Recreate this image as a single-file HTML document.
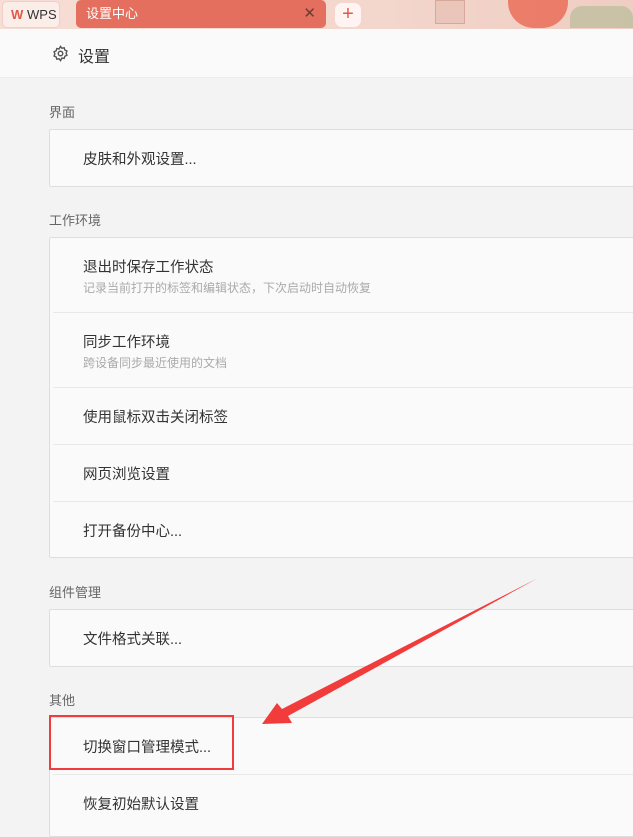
<!DOCTYPE html>
<html><head><meta charset="utf-8"><style>
*{margin:0;padding:0;box-sizing:border-box}
body{width:633px;height:824px;overflow:hidden;background:#f3f3f3;font-family:"Liberation Sans","Noto Sans CJK SC",sans-serif;position:relative}
.tabbar{position:absolute;left:0;top:0;width:633px;height:29px;background:linear-gradient(90deg,#f6ddd5,#f3d6cc 60%,#efcdc2)}
.wps{position:absolute;left:2px;top:1px;width:58px;height:27px;background:#fbeee9;border-radius:5px;border:1px solid #f0cfc5;font-size:13px;color:#333;line-height:26px;padding-left:24px}
.wps b{position:absolute;left:8px;top:0;color:#e0584a;font-size:13px}
.tab{position:absolute;left:76px;top:0;width:250px;height:28px;background:#e56f5f;border-radius:5px;color:#fff;font-size:13px;line-height:28px;padding-left:10px}
.tab i{position:absolute;right:10px;top:0;font-style:normal;color:#6b3b35;font-size:15px}
.plus{position:absolute;left:335px;top:3px;width:26px;height:24px;background:#fff4f1;border-radius:7px;color:#e0584a;text-align:center;line-height:23px;font-size:20px}
.head{position:absolute;left:0;top:29px;width:633px;height:49px;background:#fafafa;border-bottom:1px solid #ececec}
.head span{position:absolute;left:78px;top:14px;font-size:16px;color:#333}
.lbl{position:absolute;left:49px;font-size:13px;color:#666}
.card{position:absolute;left:49px;width:600px;background:#fafafa;border:1px solid #dedede;border-radius:2px}
.row{position:relative;border-bottom:1px solid #e8e8e8;margin-left:3px}
.row:last-child{border-bottom:none}
.t{position:absolute;left:30px;font-size:14.5px;color:#333;white-space:nowrap}
.s{position:absolute;left:30px;font-size:12px;color:#aaa;white-space:nowrap}
</style></head><body>
<div class="tabbar">
<div class="wps"><b>W</b>WPS</div>
<div class="tab">设置中心<i>✕</i></div>
<div class="plus">+</div>
<div style="position:absolute;left:435px;top:0;width:30px;height:24px;background:#eac6ba;border:1px solid #d8a89a"></div>
<div style="position:absolute;left:508px;top:0;width:60px;height:28px;border-radius:0 0 26px 26px;background:#e8604a;opacity:.75"></div>
<div style="position:absolute;left:570px;top:6px;width:63px;height:22px;background:#a9b890;border-radius:12px 12px 0 0;opacity:.55"></div>
</div>
<div class="head">
<svg style="position:absolute;left:52px;top:16px" width="17" height="17" viewBox="0 0 24 24" fill="none" stroke="#555" stroke-width="2"><circle cx="12" cy="12" r="3.2"/><path d="M12 2l2 2.6 3.2-.6.9 3.1 3 1.4-1.2 3 1.2 3-3 1.4-.9 3.1-3.2-.6L12 22l-2-2.6-3.2.6-.9-3.1-3-1.4 1.2-3-1.2-3 3-1.4.9-3.1 3.2.6z"/></svg>
<span>设置</span></div>

<div class="lbl" style="top:102px">界面</div>
<div class="card" style="top:129px;height:58px"><div class="row" style="height:56px"><div class="t" style="top:18px">皮肤和外观设置...</div></div></div>

<div class="lbl" style="top:210px">工作环境</div>
<div class="card" style="top:237px;height:321px">
<div class="row" style="height:75px"><div class="t" style="top:18px">退出时保存工作状态</div><div class="s" style="top:41px">记录当前打开的标签和编辑状态，下次启动时自动恢复</div></div>
<div class="row" style="height:75px"><div class="t" style="top:18px">同步工作环境</div><div class="s" style="top:41px">跨设备同步最近使用的文档</div></div>
<div class="row" style="height:57px"><div class="t" style="top:18px">使用鼠标双击关闭标签</div></div>
<div class="row" style="height:57px"><div class="t" style="top:18px">网页浏览设置</div></div>
<div class="row" style="height:55px"><div class="t" style="top:18px">打开备份中心...</div></div>
</div>

<div class="lbl" style="top:582px">组件管理</div>
<div class="card" style="top:609px;height:58px"><div class="row" style="height:56px"><div class="t" style="top:18px">文件格式关联...</div></div></div>

<div class="lbl" style="top:690px">其他</div>
<div class="card" style="top:717px;height:120px">
<div class="row" style="height:57px"><div class="t" style="top:18px">切换窗口管理模式...</div></div>
<div class="row" style="height:58px"><div class="t" style="top:18px">恢复初始默认设置</div></div>
</div>
<div style="position:absolute;left:49px;top:715px;width:185px;height:55px;border:2px solid #f23b3b"></div>
<svg style="position:absolute;left:0;top:0" width="633" height="824"><polygon points="262,724 277,703 282,709 538,578 288,716 292,723" fill="#f23b3b"/></svg>
</body></html>
